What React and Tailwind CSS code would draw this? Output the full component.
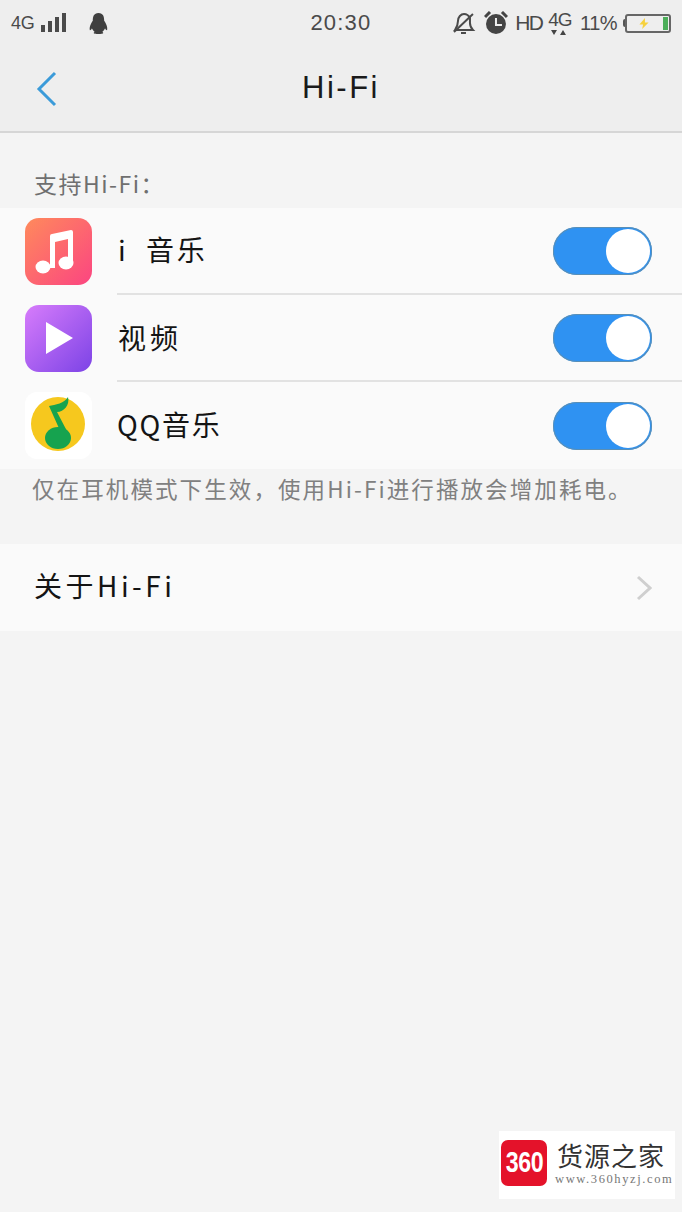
import React from 'react'

const CJK = "font-['Noto_Sans_CJK_SC','Liberation_Sans',sans-serif]"
const LATIN = "font-['Liberation_Sans',sans-serif]"

function Toggle() {
  return (
    <div className="flex h-[48px] w-[99px] items-center justify-end rounded-full bg-[#2f92f2] pr-[2px] shadow-[inset_0_0_0_1px_#5a8fb5]">
      <div className="h-[44px] w-[44px] rounded-full bg-white" />
    </div>
  )
}

function MusicIcon() {
  return (
    <svg viewBox="0 0 67 67" className="h-[67px] w-[67px]">
      <defs>
        <linearGradient id="music" x1="0" y1="0" x2="1" y2="1">
          <stop offset="0" stopColor="#ff8a5c" />
          <stop offset="1" stopColor="#fb4581" />
        </linearGradient>
      </defs>
      <rect width="67" height="67" rx="14" fill="url(#music)" />
      <path d="M25 18 Q25 16 27 16 L46 12 Q48 12 48 14 V45 H43 V21 L30 24 V50 H25 Z" fill="#fff" />
      <ellipse cx="18" cy="49" rx="7.5" ry="6.5" fill="#fff" />
      <ellipse cx="41" cy="45" rx="7.5" ry="6.5" fill="#fff" />
    </svg>
  )
}

function VideoIcon() {
  return (
    <svg viewBox="0 0 67 67" className="h-[67px] w-[67px]">
      <defs>
        <linearGradient id="video" x1="0" y1="0" x2="1" y2="1">
          <stop offset="0" stopColor="#d77cfb" />
          <stop offset="1" stopColor="#7c43e6" />
        </linearGradient>
      </defs>
      <rect width="67" height="67" rx="14" fill="url(#video)" />
      <path d="M21 17 L48 33 L21 49 Z" fill="#fff" />
    </svg>
  )
}

function QQMusicIcon() {
  return (
    <svg viewBox="0 0 67 67" className="h-[67px] w-[67px]">
      <rect width="67" height="67" rx="12" fill="#fff" />
      <circle cx="33" cy="32" r="27" fill="#f6c81e" />
      <path d="M24 14 C30 13 40 11 43 5 C45 13 39 20 32 20 L43 41 L37 43 Z" fill="#16a34f" />
      <ellipse cx="33" cy="46" rx="13" ry="11" fill="#16a34f" />
    </svg>
  )
}

function AppRow({ icon, label, labelClass, divider }) {
  return (
    <div className="flex h-[87px] items-center pl-[25px]">
      <div className="shrink-0">{icon}</div>
      <div className={`ml-[25px] flex h-full flex-1 items-center justify-between pr-[30px] ${divider ? 'border-b-2 border-[#e2e2e2]' : ''}`}>
        <span className={`${CJK} text-[28px] whitespace-pre text-[#141414] ${labelClass}`}>{label}</span>
        <Toggle />
      </div>
    </div>
  )
}

function StatusBar() {
  return (
    <div className="flex h-[46px] items-center px-[11px] text-[#4a4a4a]">
      <span className={`${LATIN} text-[18px] tracking-[-0.3px]`}>4G</span>
      <div className="mb-[2px] ml-[7px] flex items-end gap-[3px]">
        <div className="h-[7px] w-[4px] bg-[#4a4a4a]" />
        <div className="h-[11px] w-[4px] bg-[#4a4a4a]" />
        <div className="h-[15px] w-[4px] bg-[#4a4a4a]" />
        <div className="h-[19px] w-[4px] bg-[#4a4a4a]" />
      </div>
      <svg viewBox="0 0 20 22" className="ml-[23px] h-[21px] w-[19px]">
        <path d="M10 0 C5 0 4 4 4 8 C2 11 0 15 1 18 C2 18 3 17 3 16 C4 18 5 19 6 20 C4 21 5 22 8 22 H12 C15 22 16 21 14 20 C15 19 16 18 17 16 C17 17 18 18 19 18 C20 15 18 11 16 8 C16 4 15 0 10 0 Z" fill="#3f3f3f" />
      </svg>
      <span className={`${LATIN} mb-[2px] ml-[202px] w-[62px] text-[22px] tracking-[1.2px] whitespace-nowrap`}>20:30</span>
      <svg viewBox="0 0 24 24" className="ml-[80px] h-[24px] w-[24px]" fill="none" stroke="#4a4a4a" strokeWidth="2">
        <path d="M3 19 C5 16 6 13 6 10 C6 6 9 3 12 3 C15 3 17 5 18 7 V12 C18 15 19 17 21 19 Z" />
        <path d="M9 22 H14" />
        <path d="M2 21 L21 3" />
      </svg>
      <svg viewBox="0 0 24 24" className="ml-[8px] h-[24px] w-[24px]">
        <circle cx="12" cy="13" r="10" fill="#444" />
        <path d="M1 6 L6 1 M18 1 L23 6" stroke="#444" strokeWidth="3" />
        <path d="M12 7 V14 H18" stroke="#eee" strokeWidth="2" fill="none" />
      </svg>
      <span className={`${LATIN} ml-[7px] w-[29px] text-[21px] tracking-[-1.5px]`}>HD</span>
      <div className="relative ml-[4px] h-[30px] w-[26px]">
        <span className={`${LATIN} text-[19px] leading-[22px] tracking-[-1px]`}>4G</span>
        <span className="absolute top-[22px] left-[3px] flex gap-[3px]">
          <span className="h-0 w-0 border-x-[3px] border-t-[5px] border-x-transparent border-t-[#444]" />
          <span className="h-0 w-0 border-x-[3px] border-b-[5px] border-x-transparent border-b-[#444]" />
        </span>
      </div>
      <span className={`${LATIN} ml-[6px] w-[37px] text-[20px] tracking-[-0.5px] whitespace-nowrap`}>11%</span>
      <div className="ml-[6px] h-[8px] w-[2px] rounded-l-sm bg-[#555]" />
      <div className="flex h-[19px] w-[46px] items-center justify-end rounded-[3px] border-2 border-[#666] pr-[1px]">
        <svg viewBox="0 0 10 12" className="mr-[14px] h-[11px] w-[10px]"><path d="M6 0 L0 7 H4 L3 12 L10 5 H6 Z" fill="#f6d13d" /></svg>
        <div className="h-[13px] w-[5px] bg-[#4cae5a]" />
      </div>
    </div>
  )
}

function Watermark() {
  return (
    <div className="absolute top-[1131px] left-[499px] flex h-[68px] w-[176px] items-center bg-white pb-[4px] pl-[2px]">
      <div className={`${LATIN} flex h-[46px] w-[46px] shrink-0 items-center justify-center rounded-[7px] bg-[#e4122a] text-white`}>
        <span className="scale-x-[0.8] text-[29px] font-bold tracking-[-0.5px]">360</span>
      </div>
      <div className="ml-[10px] flex flex-col">
        <span className={`${CJK} text-[26px] leading-[28px] tracking-[1px] text-[#333]`}>货源之家</span>
        <span className="mt-[4px] -ml-[2px] font-['Liberation_Serif',serif] text-[12.5px] leading-[13px] tracking-[1.6px] whitespace-nowrap text-[#777]">www.360hyzj.com</span>
      </div>
    </div>
  )
}

export default function App() {
  return (
    <div className="relative h-[1212px] w-[682px] overflow-hidden bg-[#f4f4f4]">
      <div className="h-[133px] border-b-2 border-[#d6d6d6] bg-[#eeeeee]">
        <StatusBar />
        <div className="relative flex h-[85px] items-center justify-center">
          <svg viewBox="0 0 22 36" className="absolute top-[25px] left-[36px] h-[36px] w-[22px]" fill="none" stroke="#3b9bd9" strokeWidth="3">
            <path d="M19 2 L3 18 L19 34" />
          </svg>
          <span className={`${LATIN} text-[31px] tracking-[2.5px] text-[#1a1a1a]`}>Hi-Fi</span>
        </div>
      </div>

      <div className={`${CJK} flex h-[75px] items-end pb-[10px] pl-[34px] text-[23px] leading-[30px] tracking-[1.5px] text-[#6f6f6f]`}>支持Hi-Fi：</div>

      <div className="bg-[#fafafa]">
        <AppRow icon={<MusicIcon />} label="i  音乐" labelClass="mb-[3px] ml-[1px] tracking-[2.6px]" divider />
        <AppRow icon={<VideoIcon />} label="视频" labelClass="mb-[1px] ml-[1px] tracking-[4px]" divider />
        <AppRow icon={<QQMusicIcon />} label="QQ音乐" labelClass="mb-[3px] tracking-[1.7px]" />
      </div>

      <div className={`${CJK} h-[75px] pt-[4px] pl-[32px] text-[22.5px] leading-[30px] tracking-[2.1px] whitespace-nowrap text-[#808080]`}>仅在耳机模式下生效，使用Hi-Fi进行播放会增加耗电。</div>

      <div className="flex h-[87px] items-center justify-between bg-[#fafafa] pr-[30px] pl-[34px]">
        <span className={`${CJK} mb-[5px] text-[28px] tracking-[3.5px] text-[#141414]`}>关于Hi-Fi</span>
        <svg viewBox="0 0 16 26" className="h-[26px] w-[16px]" fill="none" stroke="#cfcfcf" strokeWidth="3">
          <path d="M2 2 L14 13 L2 24" />
        </svg>
      </div>

      <Watermark />
    </div>
  )
}
